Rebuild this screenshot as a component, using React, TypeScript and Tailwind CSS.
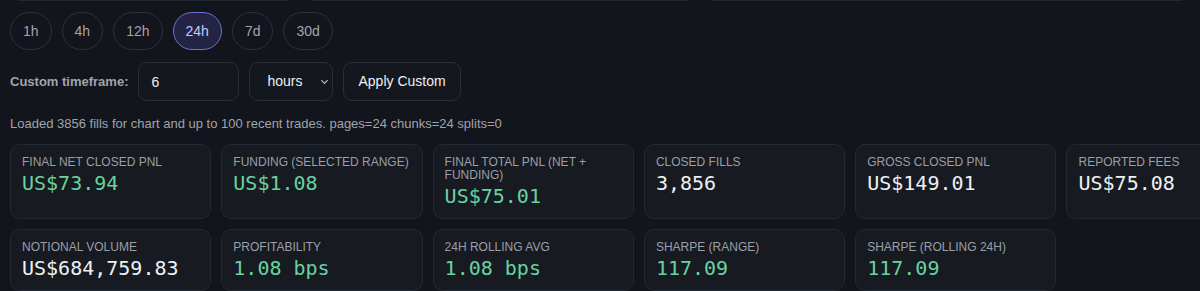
import { useState } from "react"

type Metric = {
  label: string
  value: string
  positive?: boolean
}

const ranges = ["1h", "4h", "12h", "24h", "7d", "30d"]

const metrics: Metric[] = [
  { label: "Final Net Closed PnL", value: "US$73.94", positive: true },
  { label: "Funding (Selected Range)", value: "US$1.08", positive: true },
  { label: "Final Total PnL (Net + Funding)", value: "US$75.01", positive: true },
  { label: "Closed Fills", value: "3,856" },
  { label: "Gross Closed PnL", value: "US$149.01" },
  { label: "Reported Fees", value: "US$75.08" },
  { label: "Notional Volume", value: "US$684,759.83" },
  { label: "Profitability", value: "1.08 bps", positive: true },
  { label: "24h Rolling Avg", value: "1.08 bps", positive: true },
  { label: "Sharpe (Range)", value: "117.09", positive: true },
  { label: "Sharpe (Rolling 24h)", value: "117.09", positive: true },
]

function MetricCard({ metric }: { metric: Metric }) {
  return (
    <div className="rounded-[10px] border border-[#242830] bg-[#171a21] px-[11px] pt-[11px] pb-[10px]">
      <div className="text-[12px] leading-[13px] uppercase text-[#9a9fa8]">{metric.label}</div>
      <div
        className={`mt-[2px] font-['DejaVu_Sans_Mono',monospace] text-[20px] leading-[24px] ${
          metric.positive ? "text-[#66d3a0]" : "text-[#eef0f3]"
        }`}
      >
        {metric.value}
      </div>
    </div>
  )
}

export default function App() {
  const [range, setRange] = useState("24h")
  const [amount, setAmount] = useState("6")
  const [unit, setUnit] = useState("hours")

  return (
    <div className="h-[291px] w-[1200px] overflow-hidden bg-[#12151c] font-['Liberation_Sans',Arial,sans-serif] text-[#e5e7eb]">
      {/* tail of the panel above */}
      <div className="flex h-px">
        <div className="ml-[18px] w-[270px] bg-[#23272f]" />
        <div className="ml-[24px] w-[376px] bg-[#23272f]" />
        <div className="ml-[24px] w-[470px] bg-[#23272f]" />
      </div>

      <div className="px-[10px] pt-[11px]">
        <div className="flex gap-[10px]">
          {ranges.map((r) => (
            <button
              key={r}
              onClick={() => setRange(r)}
              className={`h-[38px] rounded-full border px-[12px] text-[14px] ${
                range === r
                  ? "border-[#6e70cc] bg-[#232443] text-[#c6caf3]"
                  : "border-[#2d3039] text-[#a0a4ac]"
              }`}
            >
              {r}
            </button>
          ))}
        </div>

        <div className="mt-[12px] flex items-center gap-[10px]">
          <span className="text-[13px] font-bold text-[#a0a4ac]">Custom timeframe:</span>
          <input
            type="text"
            value={amount}
            onChange={(e) => setAmount(e.target.value)}
            className="h-[39px] w-[101px] rounded-[9px] border border-[#2a2e37] bg-[#14171e] px-[12px] text-[14px] text-[#eef0f3] outline-none"
          />
          <div className="relative">
            <select
              value={unit}
              onChange={(e) => setUnit(e.target.value)}
              className="h-[39px] w-[84px] appearance-none rounded-[9px] border border-[#2a2e37] bg-[#14171e] pl-[17px] text-[14px] text-[#eef0f3] outline-none"
            >
              <option value="minutes">minutes</option>
              <option value="hours">hours</option>
              <option value="days">days</option>
            </select>
            <svg
              className="pointer-events-none absolute right-[4px] top-[15px] h-[9px] w-[9px] text-[#b8bcc4]"
              viewBox="0 0 10 10"
              fill="none"
              stroke="currentColor"
              strokeWidth="1.3"
            >
              <path d="M1.5 3.5 5 7l3.5-3.5" />
            </svg>
          </div>
          <button className="h-[39px] rounded-[9px] border border-[#2a2e37] bg-[#14171e] px-[14px] text-[14px] text-[#eef0f3]">
            Apply Custom
          </button>
        </div>

        <p className="mt-[14px] text-[13px] leading-[18px] text-[#a0a4ac]">
          Loaded 3856 fills for chart and up to 100 recent trades. pages=24 chunks=24 splits=0
        </p>

        <div className="mt-[11px] grid grid-cols-[repeat(6,201.3px)] gap-[10px]">
          {metrics.map((m) => (
            <MetricCard key={m.label} metric={m} />
          ))}
        </div>
      </div>
    </div>
  )
}
